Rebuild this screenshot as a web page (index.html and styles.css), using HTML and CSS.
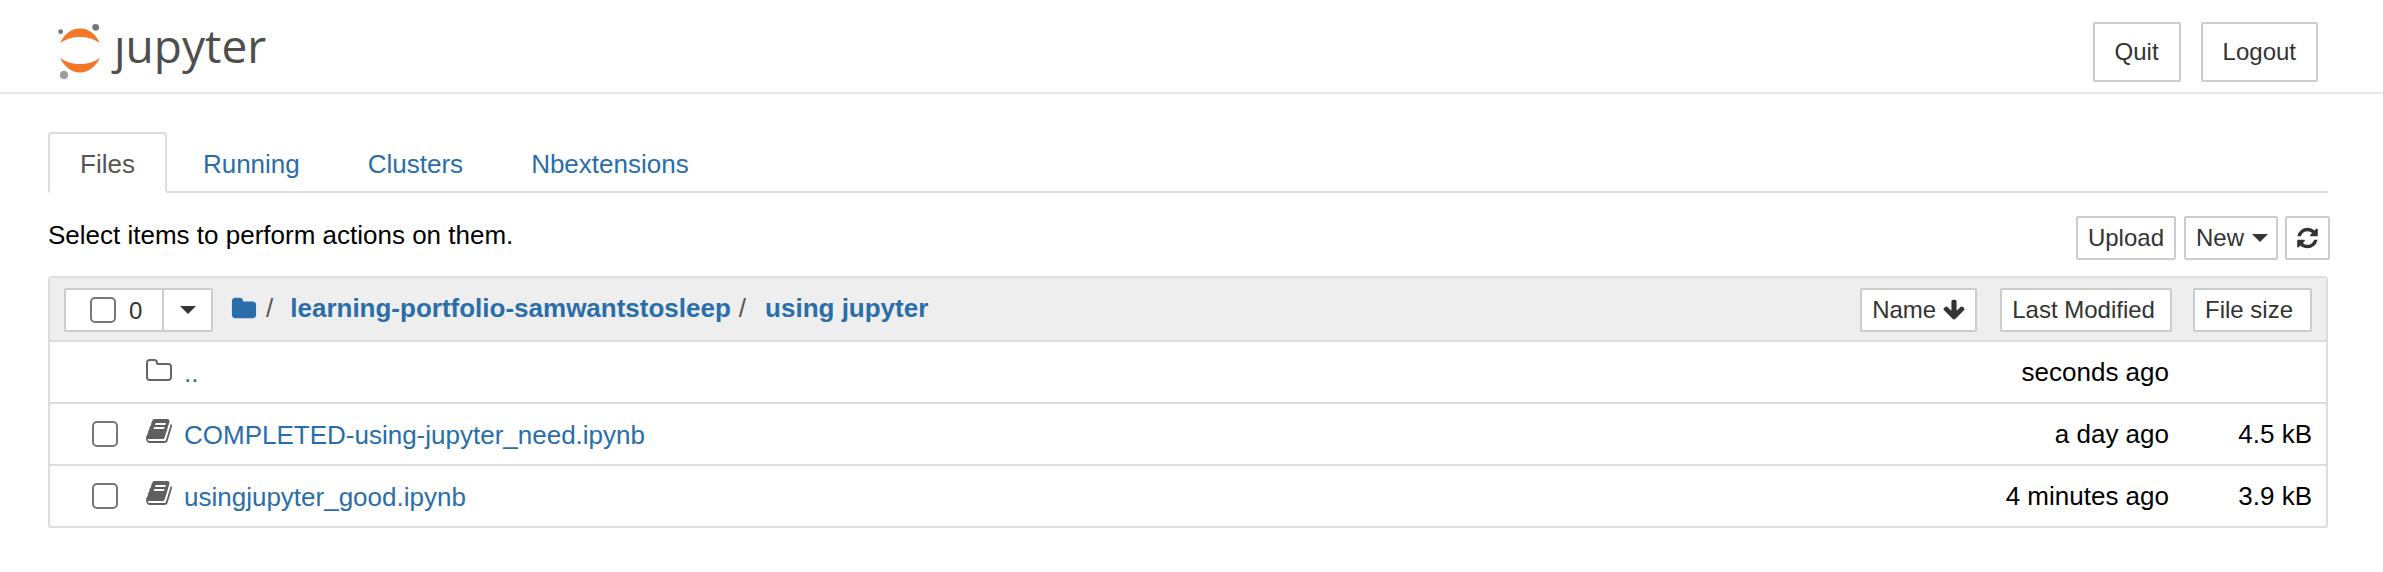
FILE: index.html
```html
<!DOCTYPE html>
<html lang="en">
<head>
<meta charset="utf-8">
<title>Home</title>
<link rel="stylesheet" href="styles.css">
</head>
<body>
<header class="site-header">
  <div class="logo">
    <svg class="logo-mark" viewBox="0 0 52 92" width="52" height="92" aria-hidden="true">
      <path class="logo-arc" d="M4 43C9 33 16 28.500 24 28.500S39 33 44 43C37 38.500 31 37 24 37S11 38.500 4 43Z"/>
      <path class="logo-arc" d="M4 58C9 67.500 16 72.500 24 72.500S39 67.500 44 58C37 62.500 31 64 24 64S11 62.500 4 58Z"/>
      <circle class="logo-dot" cx="4.700" cy="31.700" r="2.400"/>
      <circle class="logo-dot" cx="39.700" cy="27.300" r="3.400"/>
      <circle class="logo-dot-light" cx="8" cy="75" r="4.200"/>
    </svg>
    <span class="logo-text">ȷupyter</span>
  </div>
  <div class="header-actions">
    <button class="btn btn-lg">Quit</button>
    <button class="btn btn-lg">Logout</button>
  </div>
</header>

<main class="container">
  <nav class="tabs">
    <a class="tab active">Files</a>
    <a class="tab">Running</a>
    <a class="tab">Clusters</a>
    <a class="tab">Nbextensions</a>
  </nav>

  <div class="toolbar">
    <span class="hint">Select items to perform actions on them.</span>
    <div class="toolbar-actions">
      <button class="btn">Upload</button>
      <button class="btn btn-new">New <span class="caret"></span></button>
      <button class="btn btn-icon" aria-label="Refresh">
        <svg class="icon-refresh" viewBox="0 0 1536 1792" width="21" height="24"><path d="M1511 1056q0 5-1 7-64 268-268 434.5t-478 166.5q-146 0-282.5-55t-243.5-157l-129 129q-19 19-45 19t-45-19-19-45v-448q0-26 19-45t45-19h448q26 0 45 19t19 45-19 45l-137 137q71 66 161 102t187 36q134 0 250-65t186-179q11-17 53-117 8-23 30-23h192q13 0 22.5 9.5t9.5 22.5zm25-800v448q0 26-19 45t-45 19h-448q-26 0-45-19t-19-45 19-45l138-138q-148-137-349-137-134 0-250 65t-186 179q-11 17-53 117-8 23-30 23h-199q-13 0-22.5-9.5t-9.5-22.5v-7q65-268 270-434.5t480-166.5q146 0 284 55.5t245 156.5l130-129q19-19 45-19t45 19 19 45z"/></svg>
      </button>
    </div>
  </div>

  <section class="panel">
    <div class="panel-head">
      <div class="select-group">
        <div class="select-main"><input type="checkbox" class="check" aria-label="Select all"><span class="count">0</span></div>
        <div class="select-drop"><span class="caret"></span></div>
      </div>
      <div class="crumbs">
        <svg class="icon-folder" viewBox="0 0 1792 1792" width="26" height="26"><path d="M1728 608v704q0 92-66 158t-158 66h-1216q-92 0-158-66t-66-158v-960q0-92 66-158t158-66h320q92 0 158 66t66 158v32h672q92 0 158 66t66 158z"/></svg>
        <span class="sep first">/</span>
        <a class="crumb">learning-portfolio-samwantstosleep</a>
        <span class="sep">/</span>
        <a class="crumb">using jupyter</a>
      </div>
      <div class="sort-actions">
        <button class="btn btn-sort btn-sort-name">Name
          <svg class="icon-arrow" viewBox="0 0 1792 1792" width="24" height="24"><path d="M1675 832q0 53-37 90l-651 652q-39 37-91 37-53 0-90-37l-651-652q-38-36-38-90 0-53 38-91l74-75q39-37 91-37 53 0 90 37l294 294v-704q0-52 38-90t90-38h128q52 0 90 38t38 90v704l294-294q37-37 90-37 52 0 91 37l75 75q37 39 37 91z"/></svg>
        </button>
        <button class="btn btn-sort btn-sort-date">Last Modified</button>
        <button class="btn btn-sort">File size</button>
      </div>
    </div>

    <div class="row">
      <span class="row-check"></span>
      <svg class="row-icon row-icon-folder" viewBox="0 0 1792 1792" width="28" height="28"><path d="M1600 1312v-704q0-40-28-68t-68-28h-704q-40 0-68-28t-28-68v-64q0-40-28-68t-68-28h-320q-40 0-68 28t-28 68v960q0 40 28 68t68 28h1216q40 0 68-28t28-68zm128-704v704q0 92-66 158t-158 66h-1216q-92 0-158-66t-66-158v-960q0-92 66-158t158-66h320q92 0 158 66t66 158v32h672q92 0 158 66t66 158z"/></svg>
      <a class="row-name">..</a>
      <span class="row-date">seconds ago</span>
      <span class="row-size"></span>
    </div>
    <div class="row">
      <span class="row-check"><input type="checkbox" class="check" aria-label="Select"></span>
      <svg class="row-icon" viewBox="0 0 1792 1792" width="28" height="28"><path d="M1703 478q40 57 18 129l-275 906q-19 64-76.500 107.500t-122.500 43.500h-923q-77 0-148.500-53.500t-99.500-131.500q-24-67-2-127 0-4 3-27t4-37q1-8-3-21.500t-3-19.500q2-11 8-21t16.500-23.500 16.500-23.500q23-38 45-91.500t30-91.500q3-10 .5-30t-.5-28q3-11 17-28t17-23q21-36 42-92t25-90q1-9-2.500-32t.5-28q4-13 22-30.500t22-22.500q19-26 42.500-84.500t27.500-96.500q1-8-3-25.500t-2-26.500q2-8 9-18t18-23 17-21q8-12 16.500-30.500t15-35 16-36 19.500-32 26.500-23.500 36-11.500 47.500 5.500l-1 3q38-9 51-9h761q74 0 114 56t18 130l-274 906q-36 119-71.500 153.500t-128.500 34.500h-869q-27 0-38 15-11 16-1 43 24 70 144 70h923q29 0 56-15.500t35-41.500l300-987q7-22 5-57 38 15 59 43zm-1064 2q-4 13 2 22.500t20 9.500h608q13 0 25.500-9.500t16.500-22.500l21-64q4-13-2-22.500t-20-9.500h-608q-13 0-25.500 9.500t-16.500 22.500zm-83 256q-4 13 2 22.500t20 9.500h608q13 0 25.500-9.500t16.500-22.500l21-64q4-13-2-22.500t-20-9.500h-608q-13 0-25.500 9.500t-16.500 22.500z"/></svg>
      <a class="row-name">COMPLETED-using-jupyter_need.ipynb</a>
      <span class="row-date">a day ago</span>
      <span class="row-size">4.5 kB</span>
    </div>
    <div class="row">
      <span class="row-check"><input type="checkbox" class="check" aria-label="Select"></span>
      <svg class="row-icon" viewBox="0 0 1792 1792" width="28" height="28"><path d="M1703 478q40 57 18 129l-275 906q-19 64-76.500 107.500t-122.500 43.500h-923q-77 0-148.500-53.500t-99.500-131.500q-24-67-2-127 0-4 3-27t4-37q1-8-3-21.500t-3-19.500q2-11 8-21t16.500-23.500 16.500-23.500q23-38 45-91.500t30-91.500q3-10 .5-30t-.5-28q3-11 17-28t17-23q21-36 42-92t25-90q1-9-2.500-32t.5-28q4-13 22-30.500t22-22.500q19-26 42.500-84.500t27.500-96.500q1-8-3-25.500t-2-26.500q2-8 9-18t18-23 17-21q8-12 16.500-30.500t15-35 16-36 19.500-32 26.500-23.500 36-11.500 47.500 5.500l-1 3q38-9 51-9h761q74 0 114 56t18 130l-274 906q-36 119-71.500 153.500t-128.500 34.500h-869q-27 0-38 15-11 16-1 43 24 70 144 70h923q29 0 56-15.500t35-41.500l300-987q7-22 5-57 38 15 59 43zm-1064 2q-4 13 2 22.500t20 9.500h608q13 0 25.500-9.500t16.500-22.500l21-64q4-13-2-22.500t-20-9.500h-608q-13 0-25.500 9.500t-16.500 22.500zm-83 256q-4 13 2 22.500t20 9.500h608q13 0 25.500-9.500t16.500-22.500l21-64q4-13-2-22.500t-20-9.500h-608q-13 0-25.500 9.500t-16.500 22.500z"/></svg>
      <a class="row-name">usingjupyter_good.ipynb</a>
      <span class="row-date">4 minutes ago</span>
      <span class="row-size">3.9 kB</span>
    </div>
  </section>
</main>
</body>
</html>
```
FILE: styles.css
```css
* { box-sizing: border-box; }
html, body { margin: 0; padding: 0; background: #fff; }
body {
  font-family: "Liberation Sans", Arial, sans-serif;
  font-size: 26px;
  line-height: 37px;
  color: #000;
}
a { color: #296eaa; text-decoration: none; }

.site-header {
  height: 94px;
  border-bottom: 2px solid #e7e7e7;
  display: flex;
  align-items: flex-start;
  justify-content: space-between;
  padding: 0 65px 0 56px;
}
.logo { display: flex; align-items: flex-start; height: 92px; }
.logo-mark { display: block; flex: none; }
.logo-arc { fill: #f37726; }
.logo-dot { fill: #767677; }
.logo-dot-light { fill: #9e9e9e; }
.logo-text {
  font-family: "Open Sans", sans-serif;
  font-size: 46px;
  line-height: 60px;
  color: #4e4e4e;
  margin: 15px 0 0 6px;
}
.header-actions { display: flex; gap: 20px; padding-top: 22px; }

.btn {
  font-family: inherit;
  font-size: 24px;
  line-height: 34px;
  color: #333;
  background: #fff;
  border: 2px solid #ccc;
  border-radius: 2px;
  padding: 3px 10px;
  height: 44px;
  display: inline-flex;
  align-items: center;
  justify-content: center;
}
.btn-lg { height: 60px; padding: 0 20px; }

.container { width: 2280px; margin-left: 48px; }

.tabs {
  display: flex;
  gap: 4px;
  margin-top: 38px;
  height: 61px;
  border-bottom: 2px solid #ddd;
}
.tab {
  height: 61px;
  padding: 12px 30px 0;
  border: 2px solid transparent;
  border-radius: 4px 4px 0 0;
}
.tab.active {
  color: #555;
  background: #fff;
  border-color: #ddd #ddd transparent;
}

.toolbar {
  display: flex;
  justify-content: space-between;
  align-items: flex-start;
  margin-top: 23px;
  height: 44px;
}
.hint { position: relative; top: 1px; }
.toolbar-actions { display: flex; gap: 8px; margin-right: -2px; }
.btn-new { width: 94px; gap: 8px; padding: 3px 0 3px 2px; }
.btn-icon { width: 45px; padding: 0; margin-left: -1px; }
.icon-refresh { fill: #333; display: block; }
.caret {
  display: inline-block;
  width: 0;
  height: 0;
  border-top: 8px solid #333;
  border-left: 8px solid transparent;
  border-right: 8px solid transparent;
}

.panel {
  margin-top: 16px;
  border: 2px solid #ddd;
  border-radius: 4px;
}
.panel-head {
  height: 64px;
  background: #eee;
  border-bottom: 2px solid #ddd;
  display: flex;
  align-items: flex-start;
  padding: 10px 14px 0 14px;
}
.select-group {
  display: flex;
  width: 149px;
  height: 44px;
  background: #fff;
  border: 2px solid #ccc;
  border-radius: 2px;
}
.select-main {
  width: 98px;
  border-right: 2px solid #ccc;
  display: flex;
  align-items: center;
  padding-left: 24px;
  gap: 13px;
}
.count { font-size: 24px; color: #333; }
.select-drop { flex: 1; display: flex; align-items: center; justify-content: center; }
.check {
  appearance: none;
  -webkit-appearance: none;
  display: block;
  margin: 0;
  width: 26px;
  height: 26px;
  background: #fff;
  border: 2px solid #767676;
  border-radius: 5px;
  flex: none;
}
.crumbs {
  display: flex;
  align-items: center;
  height: 37px;
  margin: 2px 0 0 18px;
  font-weight: 700;
}
.icon-folder { fill: #296eaa; display: block; flex: none; }
.crumb { color: #296eaa; }
.sep { font-weight: 400; color: #555; margin: 0 19px 0 8px; }
.sep.first { margin: 0 17px 0 9px; }
.sort-actions { margin-left: auto; display: flex; gap: 21px; }
.btn-sort { padding: 3px 17px 3px 10px; gap: 6px; }
.btn-sort-date { padding-right: 15px; }
.btn-sort-name { padding-right: 9px; margin-right: 2px; }
.icon-arrow { fill: #333; display: block; }

.row {
  height: 62px;
  display: flex;
  align-items: center;
  padding-right: 14px;
  border-bottom: 2px solid #ddd;
}
.row:last-child { height: 60px; border-bottom: 0; }
.row-check { width: 95px; padding-left: 42px; flex: none; }
.row-icon { fill: #5f5f5f; display: block; flex: none; margin-top: -6px; }
.row-icon-folder { fill: #666; margin-top: -2px; }
.row-name { margin-left: 11px; position: relative; top: 1px; }
.row-date { margin-left: auto; }
.row-size { width: 143px; text-align: right; }
```
